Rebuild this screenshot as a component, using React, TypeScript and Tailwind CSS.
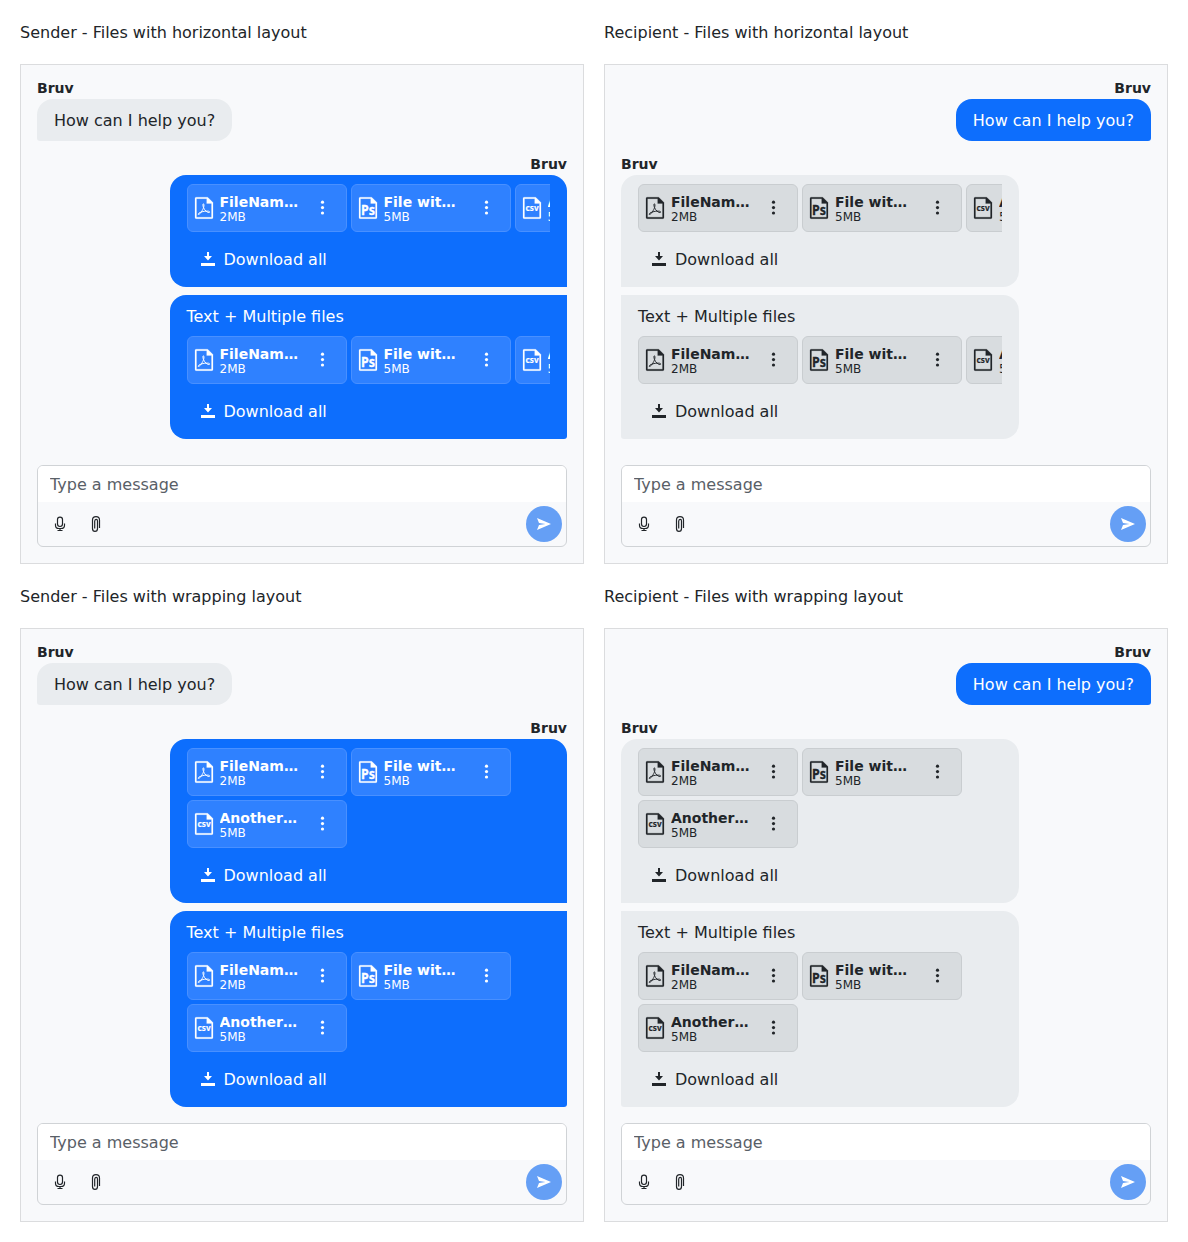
import React from 'react';

type Kind = 'pdf' | 'ps' | 'csv';

const files: { kind: Kind; name: string; size: string }[] = [
  { kind: 'pdf', name: 'FileName.pdf', size: '2MB' },
  { kind: 'ps', name: 'File with long name.psd', size: '5MB' },
  { kind: 'csv', name: 'AnotherFile.csv', size: '5MB' },
];

function FileIcon({ kind }: { kind: Kind }) {
  return (
    <svg className="size-6 shrink-0" viewBox="0 0 24 24" fill="currentColor">
      <path
        fillRule="evenodd"
        stroke="currentColor"
        strokeWidth="0.2"
        d="M4.2 1.2H15.7L21 6.5V21.4Q21 22.7 19.7 22.7H4.3Q3 22.7 3 21.4V2.5Q3 1.2 4.2 1.2ZM4.5 2.7V21.2H19.5V7.5H14.7V2.7Z"
      />
      {kind === 'pdf' && (
        <path
          d="M11.400 7.800C10.700 7.800 10.800 9.600 11.500 11.600C12.500 14 15 16.600 16.900 16.600C18 16.600 18 15.400 16.500 15.200C14 14.900 10.500 15.400 8 16.500C6.200 17.300 5.700 18.500 6.500 18.500C8 18.500 10.800 14 11.600 11.500C12.100 9.600 12.100 7.900 11.400 7.800Z"
          fill="none"
          stroke="currentColor"
          strokeWidth="0.95"
        />
      )}
      {kind === 'ps' && (
        <text x="5" y="19.200" textLength="14" lengthAdjust="spacingAndGlyphs" stroke="currentColor" strokeWidth="0.3" className="font-['Noto_Sans'] text-[14.5px] font-bold">
          Ps
        </text>
      )}
      {kind === 'csv' && (
        <text x="5.600" y="14.600" textLength="13" lengthAdjust="spacingAndGlyphs" stroke="currentColor" strokeWidth="0.15" className="font-['Noto_Sans'] text-[8.5px] font-bold">
          csv
        </text>
      )}
    </svg>
  );
}

function FileCard({ kind, name, size, own }: { kind: Kind; name: string; size: string; own: boolean }) {
  return (
    <li
      className={`flex h-12 w-40 shrink-0 items-center rounded-md border px-1 ${
        own ? 'border-[#4990ff] bg-[#2f81ff]' : 'border-[#c9cdd0] bg-[#d8dcdf]'
      }`}
    >
      <FileIcon kind={kind} />
      <div className="ml-1 w-20 shrink-0 pt-px">
        <div className="truncate text-sm leading-[17px] font-bold">{name}</div>
        <div className="text-xs leading-[13px]">{size}</div>
      </div>
      <button className="ml-[15px] flex size-4 items-center justify-center">
        <svg className="size-4" viewBox="0 0 16 16" fill="currentColor">
          <circle cx="7.500" cy="2.200" r="1.600" />
          <circle cx="7.500" cy="7.600" r="1.600" />
          <circle cx="7.500" cy="13" r="1.600" />
        </svg>
      </button>
    </li>
  );
}

function FilesBubble({ own, wrap, text, shape }: { own: boolean; wrap: boolean; text?: string; shape: string }) {
  return (
    <div
      className={`w-3/4 px-[17px] py-[9px] ${shape} ${
        own ? 'self-end bg-[#0d6efd] text-white' : 'bg-[#e9ecef] text-[#212529]'
      }`}
    >
      {text && <p className="mb-2 h-6 leading-[26px]">{text}</p>}
      <ul className={`flex gap-1 overflow-hidden ${wrap ? 'flex-wrap' : ''}`}>
        {files.map((f) => (
          <FileCard key={f.kind} {...f} own={own} />
        ))}
      </ul>
      <button className="mt-2 flex h-[38px] items-center gap-2 px-[13px]">
        <svg className="size-4" viewBox="0 0 16 16" fill="currentColor">
          <path d="M7 1h2v4h3L8 9.500 4 5h3ZM1 12h14v3H1Z" />
        </svg>
        <span className="h-6 leading-[26px]">Download all</span>
      </button>
    </div>
  );
}

function PromptBox() {
  return (
    <div className="flex h-[82px] flex-col overflow-hidden rounded-md border border-[#d0d3d6]">
      <input
        className="h-9 w-full bg-white px-3 outline-none placeholder:text-[#596067] placeholder:opacity-100"
        placeholder="Type a message"
      />
      <div className="flex flex-1 items-center px-1">
        <button className="flex size-9 items-center justify-center">
          <svg className="size-4" viewBox="0 0 16 16" fill="none" stroke="currentColor" strokeWidth="1.2">
            <rect x="5.500" y="1.200" width="5" height="9.300" rx="2.400" />
            <path d="M3.500 7.500v1.700q0 3.300 3.500 3.300h2q3.500 0 3.500-3.300V7.500M8 12.500v2M5.500 14.500h5" />
          </svg>
        </button>
        <button className="flex size-9 items-center justify-center">
          <svg className="size-4" viewBox="0 0 16 16" fill="none" stroke="currentColor" strokeWidth="1.200">
            <path d="M11.500 12V4q0-3.400-3.500-3.400T4.500 4v8.500q0 2.900 2.500 2.900t2.500-2.900V5q0-1.600-1.250-1.600T6.700 5v7.500" />
          </svg>
        </button>
        <button className="ml-auto flex size-9 items-center justify-center rounded-full bg-[#659ff5] text-white">
          <svg className="size-4" viewBox="0 0 16 16" fill="currentColor">
            <path d="M1 2 15 8 1 14 3 9 9.500 8 3 7Z" />
          </svg>
        </button>
      </div>
    </div>
  );
}

function Chat({ title, sender, wrap }: { title: string; sender: boolean; wrap: boolean }) {
  const height = wrap ? 'h-[594px]' : 'h-[500px]';
  return (
    <section className="flex flex-col gap-5">
      <h2 className="h-6 leading-[26px]">{title}</h2>
      <div className={`flex flex-col border border-[#dbdcde] bg-[#f8f9fb] px-4 pt-[13px] pb-4 ${height}`}>
        <div className={`flex flex-col ${sender ? 'items-start' : 'items-end'}`}>
          <div className="text-sm leading-[21px] font-bold">Bruv</div>
          <div
            className={`h-[42px] rounded-2xl px-[17px] py-[9px] leading-[26px] ${
              sender ? 'rounded-bl-[3px] bg-[#e9ecef]' : 'rounded-br-[3px] bg-[#0d6efd] text-white'
            }`}
          >
            How can I help you?
          </div>
        </div>
        <div className="mt-[13px] flex flex-1 flex-col">
          <div className={`text-sm leading-[21px] font-bold ${sender ? 'text-right' : ''}`}>Bruv</div>
          <div className="flex flex-col gap-2">
            <FilesBubble own={sender} wrap={wrap} shape={sender ? 'rounded-2xl rounded-br-none' : 'rounded-2xl rounded-bl-none'} />
            <FilesBubble
              own={sender}
              wrap={wrap}
              text="Text + Multiple files"
              shape={sender ? 'rounded-2xl rounded-tr-none rounded-br-[3px]' : 'rounded-2xl rounded-tl-none rounded-bl-[3px]'}
            />
          </div>
        </div>
        <PromptBox />
      </div>
    </section>
  );
}

export default function App() {
  return (
    <main className="grid h-[1242px] grid-cols-2 content-start gap-5 bg-white p-5 font-['DejaVu_Sans',sans-serif] text-base text-[#212529]">
      <Chat title="Sender - Files with horizontal layout" sender wrap={false} />
      <Chat title="Recipient - Files with horizontal layout" sender={false} wrap={false} />
      <Chat title="Sender - Files with wrapping layout" sender wrap />
      <Chat title="Recipient - Files with wrapping layout" sender={false} wrap />
    </main>
  );
}
